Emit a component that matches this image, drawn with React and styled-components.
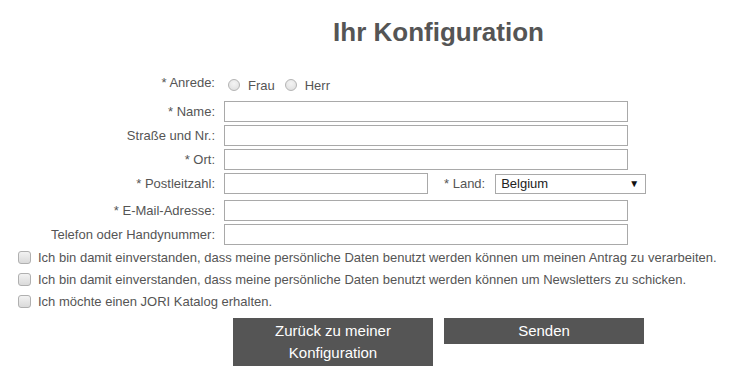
import React from "react";
import styled, { createGlobalStyle } from "styled-components";

const GlobalStyle = createGlobalStyle`
  html, body {
    margin: 0;
    padding: 0;
    background: #fff;
  }
  body {
    font-family: "Liberation Sans", Arial, sans-serif;
    color: #555;
  }
`;

const Page = styled.div`
  width: 736px;
  height: 378px;
  overflow: hidden;
  display: flex;
  flex-direction: column;
`;

const Title = styled.h1`
  margin: 0;
  padding: 17px 0 0 141px;
  text-align: center;
  font-size: 26px;
  line-height: 30px;
  font-weight: 700;
  color: #555;
`;

const Form = styled.div`
  margin-top: 26px;
  display: grid;
  grid-template-columns: 215px 1fr;
  column-gap: 9px;
  row-gap: 3px;
  align-items: center;
`;

const Label = styled.label`
  text-align: right;
  font-size: 13px;
  color: #555;
  white-space: nowrap;
  margin-bottom: ${({ $mb }) => $mb || 0}px;
`;

const Field = styled.div`
  display: flex;
  align-items: center;
  height: ${({ $h }) => $h || 21}px;
  margin-bottom: ${({ $mb }) => $mb || 0}px;
`;

const TextInput = styled.input`
  box-sizing: border-box;
  width: ${({ $w }) => $w || 404}px;
  height: 21px;
  margin: 0;
  border: 1px solid #a9a9a9;
  background: #fff;
  padding: 0 4px;
  font: 13px "Liberation Sans", Arial, sans-serif;
`;

const Radio = styled.span`
  box-sizing: border-box;
  width: 12px;
  height: 12px;
  border-radius: 50%;
  border: 1px solid #b4b4b4;
  background: radial-gradient(circle at 50% 35%, #f4f4f4 0%, #dcdcdc 100%);
  margin: 2px 8px 0 ${({ $ml }) => $ml}px;
`;

const Choice = styled.span`
  font-size: 13px;
  color: #555;
  padding-top: 3px;
`;

const InlineLabel = styled.span`
  font-size: 13px;
  color: #555;
  margin: 0 10px 0 16px;
`;

const SelectBox = styled.div`
  position: relative;
  box-sizing: border-box;
  width: 151px;
  height: 20px;
  border: 1px solid #a9a9a9;
  background: #fff;
  font-size: 13px;
  color: #222;
  line-height: 18px;
  padding-left: 5px;
`;

const Arrow = styled.span`
  position: absolute;
  right: 6px;
  top: 0;
  font-size: 10px;
  color: #111;
  line-height: 18px;
`;

const Checks = styled.div`
  margin-top: 1px;
  display: flex;
  flex-direction: column;
`;

const CheckRow = styled.div`
  height: 22px;
  display: flex;
  align-items: center;
  padding-left: 18px;
  font-size: 13px;
  color: #555;
  white-space: nowrap;
`;

const Box = styled.span`
  box-sizing: border-box;
  width: 13px;
  height: 13px;
  border-radius: 3px;
  border: 1px solid #b0b0b0;
  background: linear-gradient(#f2f2f2, #dadada);
  margin-right: 7px;
  flex: none;
`;

const Buttons = styled.div`
  margin-top: 6px;
  padding-left: 141px;
  display: flex;
  justify-content: center;
  align-items: flex-start;
  gap: 11px;
`;

const Button = styled.button`
  width: 200px;
  border: none;
  margin: 0;
  padding: 2px 20px 2px;
  background: #555;
  color: #fff;
  font: 15px/22px "Liberation Sans", Arial, sans-serif;
  cursor: pointer;
`;

const rows = ["* Name:", "Straße und Nr.:", "* Ort:"];

export default function App() {
  return (
    <Page>
      <GlobalStyle />
      <Title>Ihr Konfiguration</Title>
      <Form>
        <Label $mb={6}>* Anrede:</Label>
        <Field $mb={4}>
          <Radio $ml={4} />
          <Choice>Frau</Choice>
          <Radio $ml={10} />
          <Choice>Herr</Choice>
        </Field>
        {rows.map((label) => (
          <React.Fragment key={label}>
            <Label>{label}</Label>
            <Field>
              <TextInput type="text" />
            </Field>
          </React.Fragment>
        ))}
        <Label $mb={3}>* Postleitzahl:</Label>
        <Field $mb={3}>
          <TextInput type="text" $w={204} />
          <InlineLabel>* Land:</InlineLabel>
          <SelectBox>
            Belgium
            <Arrow>▼</Arrow>
          </SelectBox>
        </Field>
        <Label>* E-Mail-Adresse:</Label>
        <Field>
          <TextInput type="text" />
        </Field>
        <Label>Telefon oder Handynummer:</Label>
        <Field>
          <TextInput type="text" />
        </Field>
      </Form>
      <Checks>
        <CheckRow>
          <Box />
          Ich bin damit einverstanden, dass meine persönliche Daten benutzt werden können um meinen Antrag zu verarbeiten.
        </CheckRow>
        <CheckRow>
          <Box />
          Ich bin damit einverstanden, dass meine persönliche Daten benutzt werden können um Newsletters zu schicken.
        </CheckRow>
        <CheckRow>
          <Box />
          Ich möchte einen JORI Katalog erhalten.
        </CheckRow>
      </Checks>
      <Buttons>
        <Button>Zurück zu meiner Konfiguration</Button>
        <Button>Senden</Button>
      </Buttons>
    </Page>
  );
}
